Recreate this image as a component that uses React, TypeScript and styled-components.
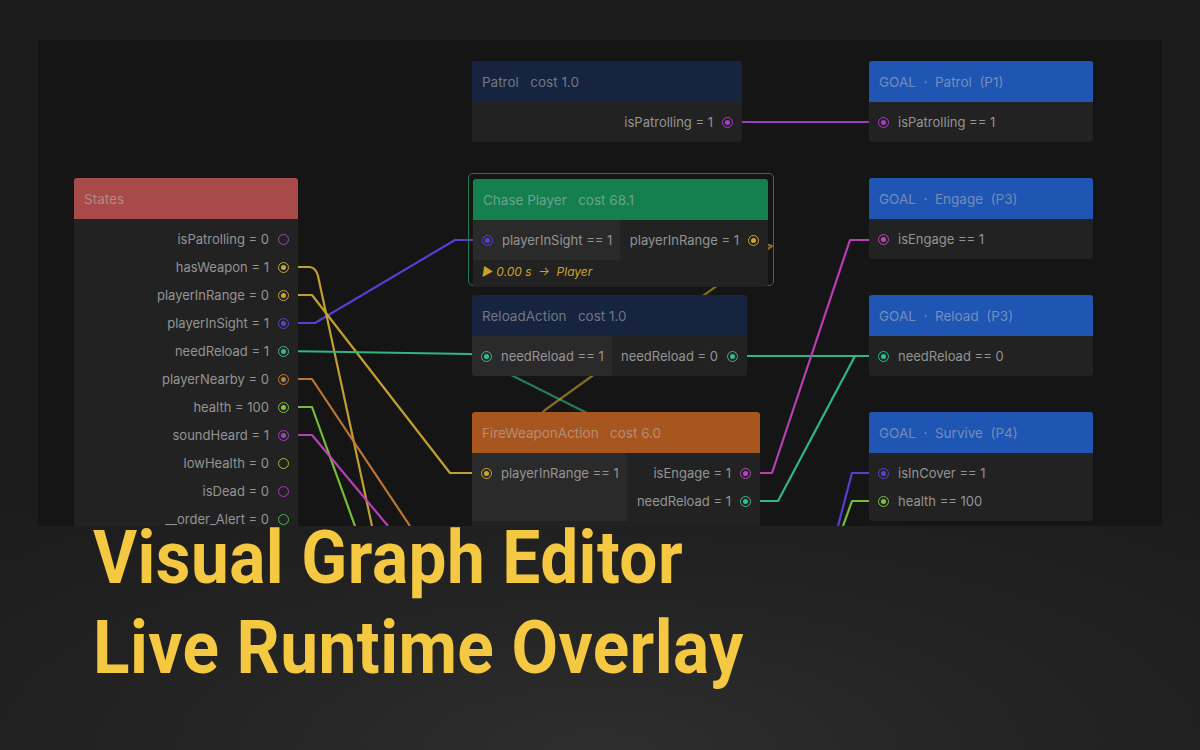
import React from "react";
import styled, { createGlobalStyle } from "styled-components";

const Global = createGlobalStyle`
  html, body { margin: 0; padding: 0; background: #1c1c1c; }
  * { box-sizing: border-box; }
`;

const Page = styled.div`
  width: 1200px; height: 750px; position: relative; overflow: hidden;
  background: radial-gradient(ellipse 900px 320px at 50% 100%, #2e2e2e 0%, #232323 50%, #1c1c1c 100%);
  font-family: Inter, "Noto Sans", sans-serif;
  padding: 40px 38px 0;
`;

const Canvas = styled.div`
  width: 1124px; height: 486px; position: relative; overflow: hidden; background: #151515;
`;

const Wires = styled.svg`
  position: absolute; left: 0; top: 0; width: 1124px; height: 486px;
`;

const Node = styled.div<{ $x: number; $y: number; $w: number }>`
  position: absolute; left: ${p => p.$x - 38}px; top: ${p => p.$y - 40}px; width: ${p => p.$w}px;
  background: #222; border-radius: 3px; overflow: hidden;
`;

const Header = styled.div<{ $bg: string }>`
  height: 41px; background: ${p => p.$bg}; color: rgba(190,190,190,0.55);
  font-size: 13.5px; display: flex; align-items: center; padding-left: 10px; white-space: pre;
`;

const Body = styled.div<{ $pad?: number }>`
  display: flex; padding-bottom: ${p => p.$pad ?? 0}px;
`;

const Col = styled.div<{ $bg?: string; $w?: number; $right?: boolean }>`
  display: flex; flex-direction: column; background: ${p => p.$bg || "transparent"};
  ${p => (p.$w ? `width:${p.$w}px;` : "flex:1;")}
  align-items: ${p => (p.$right ? "flex-end" : "flex-start")};
  padding: 6px 0;
`;

const Row = styled.div<{ $right?: boolean }>`
  height: 28px; display: flex; align-items: center; gap: 9px;
  padding: 0 ${p => (p.$right ? "9px" : "0")} 0 ${p => (p.$right ? "0" : "9px")};
  color: #949494; font-size: 13px; white-space: pre;
`;

const Port = styled.span<{ $c: string; $filled?: boolean }>`
  width: 11px; height: 11px; border-radius: 50%; border: 1.6px solid ${p => p.$c};
  display: inline-flex; align-items: center; justify-content: center;
  &::after { content: ""; width: 5px; height: 5px; border-radius: 50%; background: ${p => (p.$filled ? p.$c : "transparent")}; }
`;

const Outline = styled.div`
  position: absolute; left: ${468 - 38}px; top: ${173 - 40}px; width: 306px; height: 113px;
  border: 1.5px solid #1f7a50; border-radius: 5px;
`;

const Footer = styled.div`
  color: #c9a227; font-style: italic; font-size: 12px; padding: 4px 0 8px 9px; white-space: pre;
`;

const Title = styled.div`
  position: absolute; left: 93px; top: 512px;
  font-family: Roboto, "Liberation Sans", sans-serif; font-weight: 700; color: #f5c842;
  font-size: 75px; line-height: 90px; letter-spacing: 0.5px;
  transform: scaleX(0.9); transform-origin: left top;
`;

type P = { t: string; c: string; f?: boolean };
const C = { pur: "#a43fc4", vio: "#5a40d8", yel: "#c9a532", tea: "#2fbf8a", org: "#c77a35", grn: "#7cc43a", mag: "#c040c0" };

const R = ({ t, c, f = true }: P) => (
  <Row $right>{t}<Port $c={c} $filled={f} /></Row>
);
const L = ({ t, c, f = true }: P) => (
  <Row><Port $c={c} $filled={f} />{t}</Row>
);

const states: P[] = [
  { t: "isPatrolling = 0", c: C.pur, f: false },
  { t: "hasWeapon = 1", c: C.yel },
  { t: "playerInRange = 0", c: C.yel },
  { t: "playerInSight = 1", c: C.vio },
  { t: "needReload = 1", c: C.tea },
  { t: "playerNearby = 0", c: C.org },
  { t: "health = 100", c: C.grn },
  { t: "soundHeard = 1", c: C.pur },
  { t: "lowHealth = 0", c: "#b8b030", f: false },
  { t: "isDead = 0", c: C.pur, f: false },
  { t: "__order_Alert = 0", c: "#3fbf3f", f: false },
];

const wires: [string, string, number?][] = [
  ["M728 122 L882 122", C.pur],
  ["M284 323 L315 323 L455 240 L485 240", C.vio],
  ["M284 267 L310 267 Q316 268 318 276 L372 526", C.yel],
  ["M284 295 L312 295 L450 473 L485 473", C.yel],
  ["M284 351 L470 354 L485 356", C.tea],
  ["M485 362 L575 407 L760 500", C.tea, 0.6],
  ["M284 379 L312 379 L410 526", C.org],
  ["M284 407 L312 407 L355 526", C.grn],
  ["M284 435 L312 435 L388 526", C.mag],
  ["M754 240 L772 246 L545 410 L485 470", C.yel, 0.6],
  ["M733 356 L882 356", C.tea],
  ["M745 473 L772 473 L850 240 L882 240", C.mag],
  ["M745 501 L778 501 L855 356", C.tea],
  ["M882 473 L852 473 L838 526", C.vio],
  ["M882 501 L852 501 L843 526", C.grn],
];

export default function App() {
  return (
    <Page>
      <Global />
      <Canvas>
        <Wires viewBox="38 40 1124 486">
          {wires.map(([d, c, o], i) => (
            <path key={i} d={d} stroke={c} strokeWidth={2.2} fill="none" opacity={o ?? 0.95} strokeLinejoin="round" />
          ))}
        </Wires>

        <Node $x={74} $y={178} $w={224}>
          <Header $bg="#a84a4a">States</Header>
          <Body><Col $right>{states.map(s => <R key={s.t} {...s} />)}</Col></Body>
        </Node>

        <Node $x={472} $y={61} $w={270}>
          <Header $bg="#172440">{"Patrol   cost 1.0"}</Header>
          <Body><Col $right><R t="isPatrolling = 1" c={C.pur} /></Col></Body>
        </Node>

        <Outline />
        <Node $x={473} $y={179} $w={295}>
          <Header $bg="#14804e">{"Chase Player   cost 68.1"}</Header>
          <Body>
            <Col $bg="#2a2a2a" $w={147}><L t="playerInSight == 1" c={C.vio} /></Col>
            <Col $right><R t="playerInRange = 1" c={C.yel} /></Col>
          </Body>
          <Footer>{"▶ 0.00 s  →  Player"}</Footer>
        </Node>

        <Node $x={472} $y={295} $w={275}>
          <Header $bg="#172440">{"ReloadAction   cost 1.0"}</Header>
          <Body>
            <Col $bg="#2a2a2a" $w={140}><L t="needReload == 1" c={C.tea} /></Col>
            <Col $right><R t="needReload = 0" c={C.tea} /></Col>
          </Body>
        </Node>

        <Node $x={472} $y={412} $w={288}>
          <Header $bg="#a85620">{"FireWeaponAction   cost 6.0"}</Header>
          <Body $pad={30}>
            <Col $bg="#2a2a2a" $w={155}><L t="playerInRange == 1" c={C.yel} /></Col>
            <Col $right>
              <R t="isEngage = 1" c={C.mag} />
              <R t="needReload = 1" c={C.tea} />
            </Col>
          </Body>
        </Node>

        <Node $x={869} $y={61} $w={224}>
          <Header $bg="#1f56b4">{"GOAL  ·  Patrol  (P1)"}</Header>
          <Body><Col><L t="isPatrolling == 1" c={C.pur} /></Col></Body>
        </Node>
        <Node $x={869} $y={178} $w={224}>
          <Header $bg="#1f56b4">{"GOAL  ·  Engage  (P3)"}</Header>
          <Body><Col><L t="isEngage == 1" c={C.mag} /></Col></Body>
        </Node>
        <Node $x={869} $y={295} $w={224}>
          <Header $bg="#1f56b4">{"GOAL  ·  Reload  (P3)"}</Header>
          <Body><Col><L t="needReload == 0" c={C.tea} /></Col></Body>
        </Node>
        <Node $x={869} $y={412} $w={224}>
          <Header $bg="#1f56b4">{"GOAL  ·  Survive  (P4)"}</Header>
          <Body><Col><L t="isInCover == 1" c={C.vio} /><L t="health == 100" c={C.grn} /></Col></Body>
        </Node>
      </Canvas>
      <Title>Visual Graph Editor<br />Live Runtime Overlay</Title>
    </Page>
  );
}
